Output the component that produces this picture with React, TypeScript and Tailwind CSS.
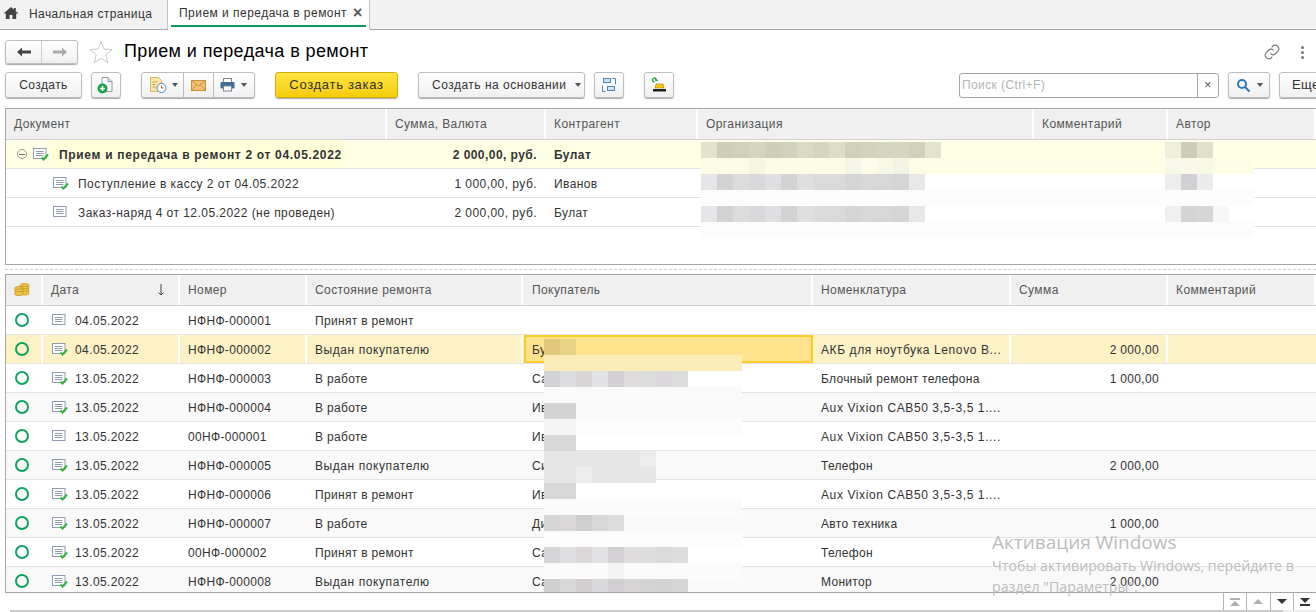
import { ReactNode } from "react";

const fill = (c: string, n: number) => Array(n).fill(c) as string[];

const topRows = [
  {
    doc: "Прием и передача в ремонт 2 от 04.05.2022",
    sum: "2 000,00, руб.",
    who: "Булат",
    posted: true,
    main: true,
  },
  {
    doc: "Поступление в кассу 2 от 04.05.2022",
    sum: "1 000,00, руб.",
    who: "Иванов",
    posted: true,
    main: false,
  },
  {
    doc: "Заказ-наряд 4 от 12.05.2022 (не проведен)",
    sum: "2 000,00, руб.",
    who: "Булат",
    posted: false,
    main: false,
  },
];

const rows = [
  { date: "04.05.2022", num: "НФНФ-000001", state: "Принят в ремонт", buyer: "", item: "", sum: "", posted: false },
  { date: "04.05.2022", num: "НФНФ-000002", state: "Выдан покупателю", buyer: "Бу", item: "АКБ для ноутбука Lenovo B...", sum: "2 000,00", posted: true },
  { date: "13.05.2022", num: "НФНФ-000003", state: "В работе", buyer: "Са", item: "Блочный ремонт телефона", sum: "1 000,00", posted: true },
  { date: "13.05.2022", num: "НФНФ-000004", state: "В работе", buyer: "Ив", item: "Aux Vixion CAB50 3,5-3,5 1....", sum: "", posted: true },
  { date: "13.05.2022", num: "00НФ-000001", state: "В работе", buyer: "Ив", item: "Aux Vixion CAB50 3,5-3,5 1....", sum: "", posted: false },
  { date: "13.05.2022", num: "НФНФ-000005", state: "Выдан покупателю", buyer: "Си", item: "Телефон", sum: "2 000,00", posted: true },
  { date: "13.05.2022", num: "НФНФ-000006", state: "Принят в ремонт", buyer: "Ив", item: "Aux Vixion CAB50 3,5-3,5 1....", sum: "", posted: true },
  { date: "13.05.2022", num: "НФНФ-000007", state: "В работе", buyer: "Ди", item: "Авто техника", sum: "1 000,00", posted: true },
  { date: "13.05.2022", num: "00НФ-000002", state: "Принят в ремонт", buyer: "Са", item: "Телефон", sum: "", posted: true },
  { date: "13.05.2022", num: "НФНФ-000008", state: "Выдан покупателю", buyer: "Са", item: "Монитор", sum: "2 000,00", posted: true },
];

const orgBlur = [
  ["bg-[#e3e3cb]", "bg-[#cfcfb9]", "bg-[#d1d1bb]", "bg-[#d6d6c0]", "bg-[#cfcfb9]", "bg-[#d1d2bd]", "bg-[#dadac4]", "bg-[#d5d5bf]", "bg-[#dedec8]", "bg-[#d1d1bb]", "bg-[#d3d3bd]", "bg-[#d3d5c1]", "bg-[#d6d6c0]", "bg-[#d1d1bb]", "bg-[#e2e4ce]"],
  [...fill("bg-[#fbfbe8]", 3), "bg-[#f6f6e4]", ...fill("bg-[#fbfbe6]", 5), "bg-[#f6f6e6]", "bg-[#fcfce8]", "bg-[#f8f8e6]", "bg-[#f2f3e4]", ...fill("bg-[#fdfde6]", 22)],
  ["bg-[#e6e5e7]", "bg-[#d2d1d3]", "bg-[#dcdcdc]", "bg-[#d9d7d9]", "bg-[#dfdfe1]", "bg-[#d3d1d3]", "bg-[#dfdfdf]", "bg-[#dadada]", "bg-[#dadada]", "bg-[#d6d5d6]", "bg-[#d8d8da]", "bg-[#d8d7d8]", "bg-[#d5d5d5]", "bg-[#e8e8ea]"],
  fill("bg-[#fcfcfc]", 35),
  ["bg-[#e6e5e7]", "bg-[#d2d1d3]", "bg-[#dcdcdc]", "bg-[#d9d7d9]", "bg-[#dfdfe1]", "bg-[#d3d1d3]", "bg-[#dfdfdf]", "bg-[#dadcda]", "bg-[#dadada]", "bg-[#d6d5d6]", "bg-[#d8d8da]", "bg-[#d8d7d8]", "bg-[#d5d5d5]", "bg-[#e8e8ea]"],
  fill("bg-[#fcfcfc]", 35),
];

const buyerBlur = [
  ["bg-[#e0c878]", "bg-[#e8d484]"],
  fill("bg-[#fbebb7]", 13),
  ["bg-[#d2d1d3]", "bg-[#dddde0]", "bg-[#d9d4d6]", "bg-[#e2e2e5]", "bg-[#d2d0d3]", "bg-[#dfdcde]", "bg-[#dcdcdc]", "bg-[#dad8da]", "bg-[#dcdcdc]"],
  fill("bg-[#fafafa]", 13),
  [...fill("bg-[#d3d3d3]", 2)],
  [...fill("bg-[#f5f5f5]", 2), ...fill("bg-[#fcfcfc]", 11)],
  [...fill("bg-[#d8d8d8]", 2)],
  [...fill("bg-[#e6e6e6]", 6), "bg-[#ececec]"],
  [...fill("bg-[#e5e5e5]", 2), "bg-[#ececec]", ...fill("bg-[#e6e6e6]", 4)],
  [...fill("bg-[#d7d7d7]", 2)],
  fill("bg-[#fbfbfb]", 13),
  ["bg-[#d6d6d6]", "bg-[#dad8d8]", "bg-[#cecece]", "bg-[#d8d8d8]", "bg-[#dcdcdc]"],
  fill("bg-[#fcfcfc]", 13),
  ["bg-[#d6d6d8]", "bg-[#dfdfe1]", "bg-[#dcd8da]", "bg-[#e2e2e4]", "bg-[#d3d1d3]", "bg-[#dfdcdd]", "bg-[#dddddd]", "bg-[#dbdadb]", "bg-[#dcdcdc]"],
  [...fill("bg-[#fbfbfb]", 4), "bg-[#f3f3f3]", ...fill("bg-[#fbfbfb]", 8)],
  ["bg-[#cfcfd0]", "bg-[#d8d8d9]", "bg-[#d2cdcf]", "bg-[#d9d9db]", "bg-[#d1cfd1]", "bg-[#d6d4d5]", "bg-[#d4d4d4]", "bg-[#d3d2d3]", "bg-[#d6d6d6]"],
];

const authorBlur = [
  ["bg-[#eeeedc]", "bg-[#ccccb8]", "bg-[#e0e0cc]"],
  ["bg-[#f8f8e8]", "bg-[#f8f8e6]", "bg-[#f8f8e6]"],
  ["bg-[#ededee]", "bg-[#d2d0d3]", "bg-[#ebebee]"],
  fill("bg-[#fcfcfc]", 3),
  ["bg-[#f0f0f0]", "bg-[#d4d4d4]", "bg-[#d6d6d6]", "bg-[#f7f7f7]"],
];

function Mosaic({ rows, className }: { rows: string[][]; className: string }) {
  return (
    <div className={`absolute flex flex-col overflow-hidden ${className}`}>
      {rows.map((cells, i) => (
        <div key={i} className="flex h-4">
          {cells.map((c, j) => (
            <div key={j} className={`h-4 w-4 shrink-0 ${c}`} />
          ))}
        </div>
      ))}
    </div>
  );
}

function Btn({ className = "", children }: { className?: string; children: ReactNode }) {
  return (
    <div
      className={`flex h-[26px] shrink-0 items-center rounded-[3px] border border-[#bdbdbd] bg-linear-to-b from-white to-[#f0f0f0] shadow-[0_1px_1px_#a8a8a8] ${className}`}
    >
      {children}
    </div>
  );
}

function Caret() {
  return <div className="h-0 w-0 border-x-[3.5px] border-t-[4px] border-x-transparent border-t-[#555]" />;
}

function DocIcon({ posted, className = "" }: { posted: boolean; className?: string }) {
  return (
    <svg width="16" height="14" viewBox="0 0 16 14" className={`shrink-0 ${className}`}>
      <rect x="0.5" y="1.5" width="12.500" height="10" fill="#fff" stroke="#8f9cad" />
      <path d="M3 4.500h7.500M3 6.500h7.500M3 8.500h7.500" stroke="#8f9cad" />
      {posted && <path d="M8.500 10.500l2 2 4.500-5" fill="none" stroke="#35b03f" strokeWidth="2" />}
    </svg>
  );
}

function Ring() {
  return <div className="h-[14px] w-[14px] rounded-full border-[2.5px] border-[#0fa35e]" />;
}

function Header({ title, className = "", children }: { title?: string; className?: string; children?: ReactNode }) {
  return (
    <div className={`flex h-full items-center border-r-2 border-white pl-2 text-[#555] ${className}`}>
      {title}
      {children}
    </div>
  );
}

export default function App() {
  return (
    <div className="relative flex h-[612px] w-[1316px] flex-col overflow-hidden bg-white font-['Liberation_Sans',Arial,sans-serif] text-[12px] tracking-[0.4px] text-[#333]">
      {/* вкладки */}
      <div className="flex h-[30px] shrink-0 border-b border-[#a6a6a6] bg-[#f2f2f2]">
        <div className="flex w-[168px] items-center border-r border-[#c4c4c4] pb-[2px]">
          <svg width="16" height="14" viewBox="0 0 16 14" className="ml-[3px] -mt-[2px]">
            <path d="M8 1L.5 7.500h2.300V13h3.800V9h2.800v4h3.800V7.500h2.300L12.800 5.200V2h-2v1.500z" fill="#444" />
          </svg>
          <span className="ml-[10px]">Начальная страница</span>
        </div>
        <div className="relative flex h-[30px] w-[202px] items-center border-r border-[#c4c4c4] bg-white pb-[4px] pl-[11px]">
          <span className="tracking-[0.47px]">Прием и передача в ремонт</span>
          <span className="ml-[6px] text-[16px] font-bold leading-none text-[#555]">×</span>
          <div className="absolute bottom-[3px] left-[3px] h-[2px] w-[195px] bg-[#0e9b56]" />
        </div>
      </div>

      {/* заголовок */}
      <div className="flex h-[42px] shrink-0 items-center pl-[5px] pr-[12px] pt-[2px]">
        <div className="flex h-[24px] w-[73px] items-center rounded-[3px] border border-[#bdbdbd] bg-linear-to-b from-white to-[#f0f0f0] shadow-[0_1px_1px_#a8a8a8]">
          <div className="flex h-full w-[36px] items-center justify-center border-r border-[#cfcfcf]">
            <svg width="14" height="10" viewBox="0 0 14 10">
              <path d="M0 5l5-4.500V3.500h9v3H5v3z" fill="#444" />
            </svg>
          </div>
          <div className="flex flex-1 items-center justify-center">
            <svg width="14" height="10" viewBox="0 0 14 10">
              <path d="M14 5L9 .5V3.500H0v3h9v3z" fill="#aaa" />
            </svg>
          </div>
        </div>
        <svg width="24" height="24" viewBox="0 0 24 24" className="ml-[11px]">
          <path d="M12 1.500l3 7.600 8 .5-6.200 5.200 2 7.900L12 18.400l-6.800 4.300 2-7.900L1 9.600l8-.5z" fill="#fff" stroke="#c8c8c8" />
        </svg>
        <h1 className="ml-[11px] -mt-[2px] text-[18px] leading-none tracking-[0.4px] text-black">Прием и передача в ремонт</h1>
        <svg width="18" height="18" viewBox="0 0 24 24" className="ml-auto" fill="none" stroke="#777" strokeWidth="1.500">
          <path d="M10 14a5 5 0 007 0l3-3a5 5 0 00-7-7l-1.500 1.500" />
          <path d="M14 10a5 5 0 00-7 0l-3 3a5 5 0 007 7l1.500-1.500" />
        </svg>
        <div className="ml-[20px] flex flex-col gap-[2px]">
          <div className="h-[3px] w-[3px] rounded-full bg-[#777]" />
          <div className="h-[3px] w-[3px] rounded-full bg-[#777]" />
          <div className="h-[3px] w-[3px] rounded-full bg-[#777]" />
        </div>
      </div>

      {/* панель команд */}
      <div className="flex h-[26px] shrink-0 items-center pl-[5px]">
        <Btn className="w-[77px] justify-center">Создать</Btn>
        <Btn className="ml-[9px] w-[30px] justify-center">
          <svg width="18" height="18" viewBox="0 0 18 18">
            <path d="M5 1.500h6l4 4v10H5z" fill="#fafafa" stroke="#8c9aa8" />
            <path d="M11 1.500v4h4" fill="#dfe5ea" stroke="#8c9aa8" />
            <circle cx="5.500" cy="12.500" r="5" fill="#16a34a" />
            <path d="M5.500 10v5M3 12.500h5" stroke="#fff" strokeWidth="1.600" />
          </svg>
        </Btn>
        <div className="ml-[20px] flex h-[26px] w-[114px] shrink-0 rounded-[3px] border border-[#bdbdbd] bg-linear-to-b from-white to-[#f0f0f0] shadow-[0_1px_1px_#a8a8a8]">
          <div className="flex w-[42px] items-center gap-[5px] border-r border-[#bdbdbd] pl-[7px]">
            <svg width="18" height="18" viewBox="0 0 18 18">
              <path d="M1.500 1.500h8l3 3v11h-11z" fill="#fbe7a8" stroke="#d9b65c" />
              <path d="M3.500 6h5M3.500 8.500h3M3.500 11h3" stroke="#c9a24a" />
              <circle cx="12.500" cy="12" r="4.500" fill="#fff" stroke="#4a86c5" />
              <path d="M12.500 9.500V12h2" fill="none" stroke="#d9534f" />
            </svg>
            <Caret />
          </div>
          <div className="flex w-[30px] items-center justify-center border-r border-[#bdbdbd]">
            <svg width="15" height="11" viewBox="0 0 15 11">
              <rect x="0.500" y="0.500" width="14" height="10" fill="#f2c078" stroke="#c98f3e" />
              <path d="M.5.500l7 5.500 7-5.500M.5 10.500l5-6M14.500 10.500l-5-6" fill="none" stroke="#c98f3e" />
            </svg>
          </div>
          <div className="flex flex-1 items-center gap-[6px] pl-[6px]">
            <svg width="15" height="14" viewBox="0 0 15 14">
              <rect x="3.500" y="0.500" width="8" height="4" fill="#fff" stroke="#7a8794" />
              <rect x="0.500" y="4" width="14" height="6.500" rx="1" fill="#3f6d96" />
              <rect x="3.500" y="8" width="8" height="5" fill="#fff" stroke="#7a8794" />
            </svg>
            <Caret />
          </div>
        </div>
        <div className="ml-[20px] flex h-[26px] w-[123px] shrink-0 items-center justify-center rounded-[3px] border border-[#cfae12] bg-linear-to-b from-[#ffe540] to-[#f5cb00] text-[13px] tracking-[0.7px] text-[#333] shadow-[0_1px_1px_#a8a8a8]">
          Создать заказ
        </div>
        <Btn className="ml-[20px] w-[167px] pl-[13px]">
          <span className="tracking-[0.5px]">Создать на основании</span>
          <span className="ml-[8px]">
            <Caret />
          </span>
        </Btn>
        <Btn className="ml-[9px] w-[30px] justify-center">
          <svg width="16" height="16" viewBox="0 0 16 16" fill="none" stroke="#4d87b5">
            <rect x="2.500" y="1.500" width="7" height="4" fill="#cfe0ee" />
            <rect x="6.500" y="9.500" width="7" height="4" fill="#cfe0ee" />
            <path d="M11.500 1.500h3v6M4.500 14.500h-3v-6" />
          </svg>
        </Btn>
        <Btn className="ml-[20px] w-[30px] justify-center">
          <svg width="18" height="16" viewBox="0 0 18 16">
            <path d="M6.500 3a2 2 0 10-2 2" fill="none" stroke="#2ba84a" strokeWidth="1.300" />
            <path d="M5.500 1v2.500H8" fill="none" stroke="#2ba84a" />
            <path d="M6 7h7l1 4H5z" fill="#f5c800" stroke="#8a7000" strokeWidth="0.500" />
            <rect x="3" y="12" width="13" height="2.500" fill="#222" />
          </svg>
        </Btn>
        <div className="ml-[285px] flex h-[25px] w-[260px] shrink-0 rounded-[3px] border border-[#a6a6a6] bg-white">
          <span className="flex-1 self-center pl-[2px] text-[#b4b4b4]">Поиск (Ctrl+F)</span>
          <span className="flex w-[21px] items-center justify-center border-l border-[#a6a6a6] text-[#555]">×</span>
        </div>
        <Btn className="ml-[9px] w-[42px] justify-center gap-[6px]">
          <svg width="15" height="15" viewBox="0 0 15 15" fill="none" stroke="#2d78b9" strokeWidth="2">
            <circle cx="6" cy="6" r="4" />
            <path d="M9 9l4.500 4.500" />
          </svg>
          <Caret />
        </Btn>
        <Btn className="ml-[9px] w-[60px] pl-[12px] text-[13px]">Еще</Btn>
      </div>

      {/* связанные документы */}
      <div className="ml-[5px] mt-[10px] h-[157px] shrink-0 border-y border-l border-[#a6a6a6]">
        <div className="grid h-[31px] grid-cols-[381px_159px_152px_336px_134px_148px] border-b border-[#d0d0d0] bg-[#f0f0f0]">
          <Header title="Документ" />
          <Header title="Сумма, Валюта" />
          <Header title="Контрагент" />
          <Header title="Организация" />
          <Header title="Комментарий" />
          <Header title="Автор" className="border-r-0" />
        </div>
        {topRows.map((r) => (
          <div
            key={r.doc}
            className={`grid h-[29px] grid-cols-[381px_159px_152px_336px_134px_148px] items-center border-b border-[#e4e4e4] ${
              r.main ? "bg-[#ffffe6] font-bold" : ""
            }`}
          >
            <div className="flex h-full items-center">
              {r.main ? (
                <>
                  <div className="ml-[11px] flex h-[10px] w-[10px] items-center justify-center rounded-full border border-[#999]">
                    <div className="h-px w-[6px] bg-[#777]" />
                  </div>
                  <DocIcon posted={r.posted} className="ml-[6px]" />
                  <span className="ml-[2px] flex h-full items-center bg-[#ffffdc] pl-[8px] pr-[3px] pt-px tracking-[0.68px]">
                    {r.doc}
                  </span>
                </>
              ) : (
                <>
                  <DocIcon posted={r.posted} className="ml-[47px]" />
                  <span className="ml-[9px] pt-px tracking-[0.46px]">{r.doc}</span>
                </>
              )}
            </div>
            <div className="pr-[9px] pt-px text-right tracking-[0.45px]">{r.sum}</div>
            <div className="pl-2 pt-px">{r.who}</div>
          </div>
        ))}
      </div>

      {/* разделитель */}
      <div className="flex h-[9px] shrink-0 items-center pl-[5px]">
        <div className="w-full border-t border-dashed border-[#cfcfcf]" />
      </div>

      {/* список */}
      <div className="ml-[5px] h-[319px] shrink-0 overflow-hidden border-y border-l border-[#a6a6a6]">
        <div className="grid h-[31px] grid-cols-[37px_137px_127px_216px_290px_198px_157px_148px] border-b border-[#d0d0d0] bg-[#f0f0f0]">
          <Header>
            <svg width="16" height="14" viewBox="0 0 16 14" stroke="#b98a1a" strokeWidth="0.700" fill="#f5c842">
              <ellipse cx="10.500" cy="2.500" rx="4.500" ry="2" />
              <ellipse cx="10.500" cy="5" rx="4.500" ry="2" />
              <ellipse cx="5" cy="5.500" rx="4.500" ry="2" />
              <ellipse cx="10.500" cy="7.500" rx="4.500" ry="2" />
              <ellipse cx="5" cy="8" rx="4.500" ry="2" />
              <ellipse cx="10.500" cy="10" rx="4.500" ry="2" />
              <ellipse cx="5" cy="10.500" rx="4.500" ry="2" />
            </svg>
          </Header>
          <Header title="Дата" className="justify-between pr-[13px]">
            <svg width="8" height="12" viewBox="0 0 8 12" fill="none" stroke="#444">
              <path d="M4 0v11M1.500 8.500L4 11l2.500-2.500" />
            </svg>
          </Header>
          <Header title="Номер" />
          <Header title="Состояние ремонта" />
          <Header title="Покупатель" className="pl-[9px]" />
          <Header title="Номенклатура" />
          <Header title="Сумма" />
          <Header title="Комментарий" className="border-r-0" />
        </div>
        {rows.map((r, i) => {
          const selected = i === 1;
          const stripe = i > 2 && i % 2 === 1;
          const sep = selected ? "border-r-2 border-white" : "";
          return (
            <div
              key={r.num}
              className={`grid h-[29px] grid-cols-[37px_137px_127px_216px_290px_198px_157px_148px] border-b border-[#e4e4e4] ${
                selected ? "bg-[#fdf1c6]" : stripe ? "bg-[#f9f9f9]" : ""
              }`}
            >
              <div className={`flex h-full items-center pl-[9px] ${sep}`}>
                <Ring />
              </div>
              <div className={`flex h-full items-center pl-2 ${sep}`}>
                <DocIcon posted={r.posted} className="ml-[1px]" />
                <span className="ml-[7px] pt-px tracking-[0.4px]">{r.date}</span>
              </div>
              <div className={`flex h-full items-center pl-2 pt-px tracking-[0.32px] ${sep}`}>{r.num}</div>
              <div
                className={`flex h-full items-center pl-2 pt-px ${
                  r.state.startsWith("Выдан") ? "tracking-[0.58px]" : "tracking-[0.32px]"
                } ${sep}`}
              >
                {r.state}
              </div>
              <div
                className={
                  selected
                    ? "ml-px flex h-full items-center border-2 border-[#fbcb26] bg-[#fee28c] pl-[6px] pt-px"
                    : "flex h-full items-center pl-[9px] pt-px"
                }
              >
                {r.buyer}
              </div>
              <div
                className={`flex h-full items-center whitespace-nowrap pl-2 pt-px ${
                  r.item.endsWith("...") ? "tracking-[0.6px]" : "tracking-[0.3px]"
                } ${sep}`}
              >
                {r.item}
              </div>
              <div className={`flex h-full items-center justify-end pt-px tracking-[0.32px] ${selected ? "border-r-2 border-white pr-[7px]" : "pr-[9px]"}`}>
                {r.sum}
              </div>
              <div className="h-full" />
            </div>
          );
        })}
      </div>

      {/* навигация по списку */}
      <div className="flex h-[17px] shrink-0 justify-end">
        <div className="flex h-full w-[93px]">
          <div className="flex flex-1 items-center justify-center border-l border-[#b5b5b5]">
            <div className="flex flex-col items-center gap-px">
              <div className="h-[2px] w-[10px] bg-[#b0b0b0]" />
              <div className="h-0 w-0 border-x-[5px] border-b-[5px] border-x-transparent border-b-[#b0b0b0]" />
            </div>
          </div>
          <div className="flex flex-1 items-center justify-center border-l border-[#b5b5b5]">
            <div className="h-0 w-0 border-x-[5px] border-b-[5px] border-x-transparent border-b-[#b0b0b0]" />
          </div>
          <div className="flex flex-1 items-center justify-center border-l border-[#b5b5b5]">
            <div className="h-0 w-0 border-x-[5px] border-t-[5px] border-x-transparent border-t-[#333]" />
          </div>
          <div className="flex flex-1 items-center justify-center border-l border-[#b5b5b5]">
            <div className="flex flex-col items-center gap-px">
              <div className="h-0 w-0 border-x-[5px] border-t-[5px] border-x-transparent border-t-[#333]" />
              <div className="h-[2px] w-[10px] bg-[#333]" />
            </div>
          </div>
        </div>
      </div>

      {/* прокрутка */}
      <div className="flex h-[2px] shrink-0 pl-[10px]">
        <div className="h-full w-[1273px] bg-[#cccccc]" />
        <div className="h-full flex-1 bg-[#eeeeee]" />
      </div>

      {/* размытые данные */}
      <Mosaic rows={orgBlur} className="left-[701px] top-[142px] w-[553px]" />
      <Mosaic rows={authorBlur} className="left-[1165px] top-[142px]" />
      <Mosaic rows={buyerBlur} className="left-[544px] top-[339px] h-[253px] w-[198px]" />

      {/* водяной знак */}
      <div className="pointer-events-none absolute left-[992px] top-[530px] font-['Open_Sans',sans-serif] tracking-normal text-[#bcbcbc]">
        <div className="text-[19px] leading-[25px]">Активация Windows</div>
        <div className="w-[320px] text-[14.2px] leading-[21px]">
          Чтобы активировать Windows, перейдите в раздел "Параметры".
        </div>
      </div>
    </div>
  );
}
